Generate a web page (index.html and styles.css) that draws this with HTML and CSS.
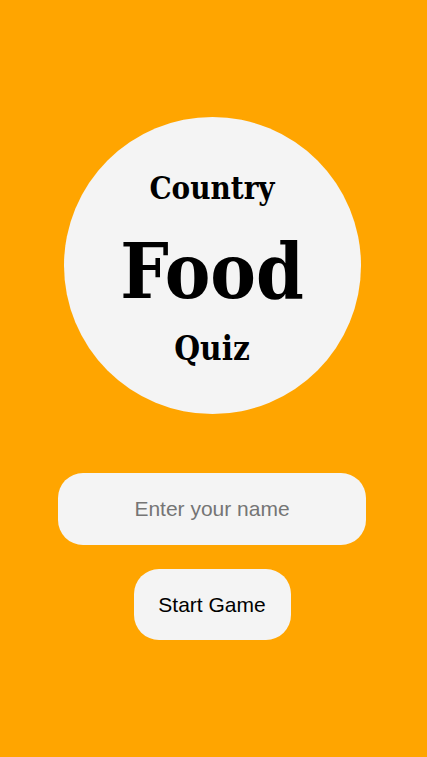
FILE: index.html
```html
<!DOCTYPE html>
<html lang="en">
<head>
<meta charset="utf-8">
<title>Country Food Quiz</title>
<link rel="stylesheet" href="styles.css">
</head>
<body>
<main class="page">
  <div class="logo">
    <div class="logo-small">Country</div>
    <div class="logo-big">Food</div>
    <div class="logo-quiz">Quiz</div>
  </div>
  <input class="name-input" type="text" placeholder="Enter your name">
  <button class="start-btn" type="button">Start Game</button>
</main>
</body>
</html>
```
FILE: styles.css
```css
html, body {
  margin: 0;
  padding: 0;
  background: #ffa500;
  height: 100%;
}
.page {
  display: flex;
  flex-direction: column;
  align-items: center;
  padding-top: 117px;
  padding-right: 3px;
}
.logo {
  width: 297px;
  height: 297px;
  box-sizing: border-box;
  padding-top: 51px;
  border-radius: 50%;
  background: #f4f4f4;
  display: flex;
  flex-direction: column;
  align-items: center;
  font-family: "DejaVu Serif", serif;
  font-stretch: condensed;
  font-weight: bold;
  color: #000;
}
.logo-small {
  font-size: 31px;
  line-height: 40px;
}
.logo-big {
  margin-top: 19px;
  font-size: 76px;
  line-height: 90px;
}
.logo-quiz {
  margin-top: 12px;
  font-size: 33px;
  line-height: 40px;
}
.name-input {
  margin-top: 59px;
  width: 308px;
  height: 72px;
  box-sizing: border-box;
  border: none;
  border-radius: 25px;
  background: #f4f4f4;
  font-family: "Liberation Sans", Arial, sans-serif;
  font-size: 21px;
  text-align: center;
  outline: none;
}
.name-input::placeholder {
  color: #757575;
}
.start-btn {
  margin-top: 24px;
  width: 157px;
  height: 71px;
  border: none;
  border-radius: 25px;
  background: #f4f4f4;
  font-family: "Liberation Sans", Arial, sans-serif;
  font-size: 21px;
  color: #000;
}
```
